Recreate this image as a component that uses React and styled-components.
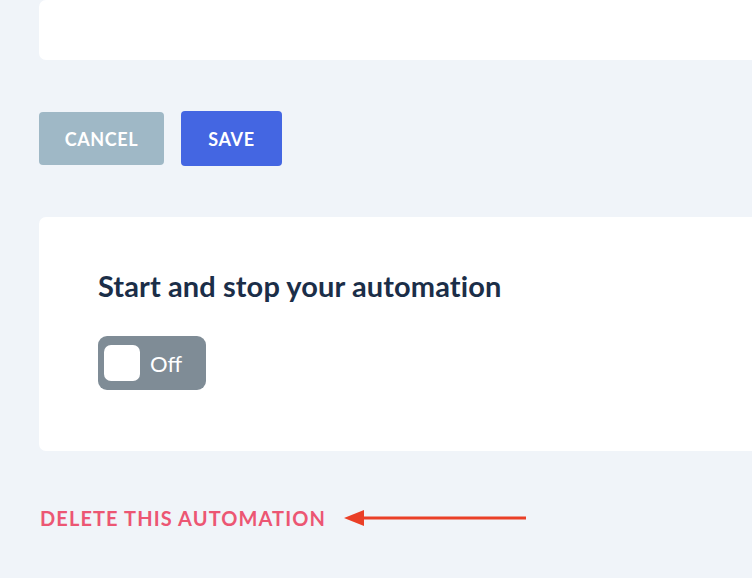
import React from "react";
import styled, { createGlobalStyle } from "styled-components";

const GlobalStyle = createGlobalStyle`
  html, body {
    margin: 0;
    padding: 0;
    background: #f0f4f9;
    overflow: hidden;
    font-family: Lato, "Open Sans", sans-serif;
  }
`;

const Page = styled.div`
  width: 752px;
  height: 578px;
  padding-left: 39px;
  box-sizing: border-box;
  overflow: hidden;
`;

const Card = styled.div`
  background: #ffffff;
  border-radius: 7px;
  width: 760px;
  box-sizing: border-box;
  height: ${(p) => p.height}px;
  margin-top: ${(p) => p.top || 0}px;
  padding: ${(p) => p.pad || "0"};
`;

const ButtonRow = styled.div`
  display: flex;
  align-items: center;
  gap: 17px;
  margin-top: 51px;
`;

const Button = styled.button`
  border: none;
  border-radius: 4px;
  height: ${(p) => (p.primary ? 55 : 53)}px;
  padding: 0;
  width: ${(p) => p.width}px;
  background: ${(p) => (p.primary ? "#4466e2" : "#9fb8c6")};
  color: #ffffff;
  font-family: Lato, "Open Sans", sans-serif;
  font-weight: 700;
  font-size: 18px;
  letter-spacing: 0.6px;
  text-transform: uppercase;
  cursor: pointer;
`;

const Heading = styled.h2`
  margin: 0;
  font-size: 29px;
  line-height: 35px;
  font-weight: 700;
  color: #1b2e48;
  letter-spacing: 0.1px;
`;

const Toggle = styled.div`
  display: flex;
  align-items: center;
  gap: 10px;
  width: 108px;
  height: 54px;
  margin-top: 33px;
  padding-left: 6px;
  box-sizing: border-box;
  background: #7f8c96;
  border-radius: 9px;
  color: #ffffff;
  font-size: 22px;
`;

const Knob = styled.span`
  width: 36px;
  height: 36px;
  background: #ffffff;
  border-radius: 7px;
`;

const DeleteRow = styled.div`
  display: flex;
  align-items: center;
  gap: 18px;
  margin-top: 55px;
  padding-left: 1px;
`;

const DeleteLink = styled.a`
  color: #ec5673;
  font-weight: 700;
  font-size: 20px;
  letter-spacing: 1.1px;
  text-transform: uppercase;
  text-decoration: none;
  cursor: pointer;
`;

const Arrow = () => (
  <svg width="184" height="20" viewBox="0 0 184 20">
    <line x1="18" y1="10" x2="182" y2="10" stroke="#ea3f27" strokeWidth="3" />
    <polygon points="0,10 20,2 20,18" fill="#ea3f27" />
  </svg>
);

export default function App() {
  return (
    <Page>
      <GlobalStyle />
      <Card height={60} />
      <ButtonRow>
        <Button width={125}>Cancel</Button>
        <Button primary width={101}>Save</Button>
      </ButtonRow>
      <Card top={51} height={234} pad="51px 0 0 59px">
        <Heading>Start and stop your automation</Heading>
        <Toggle>
          <Knob />
          Off
        </Toggle>
      </Card>
      <DeleteRow>
        <DeleteLink>Delete this automation</DeleteLink>
        <Arrow />
      </DeleteRow>
    </Page>
  );
}
